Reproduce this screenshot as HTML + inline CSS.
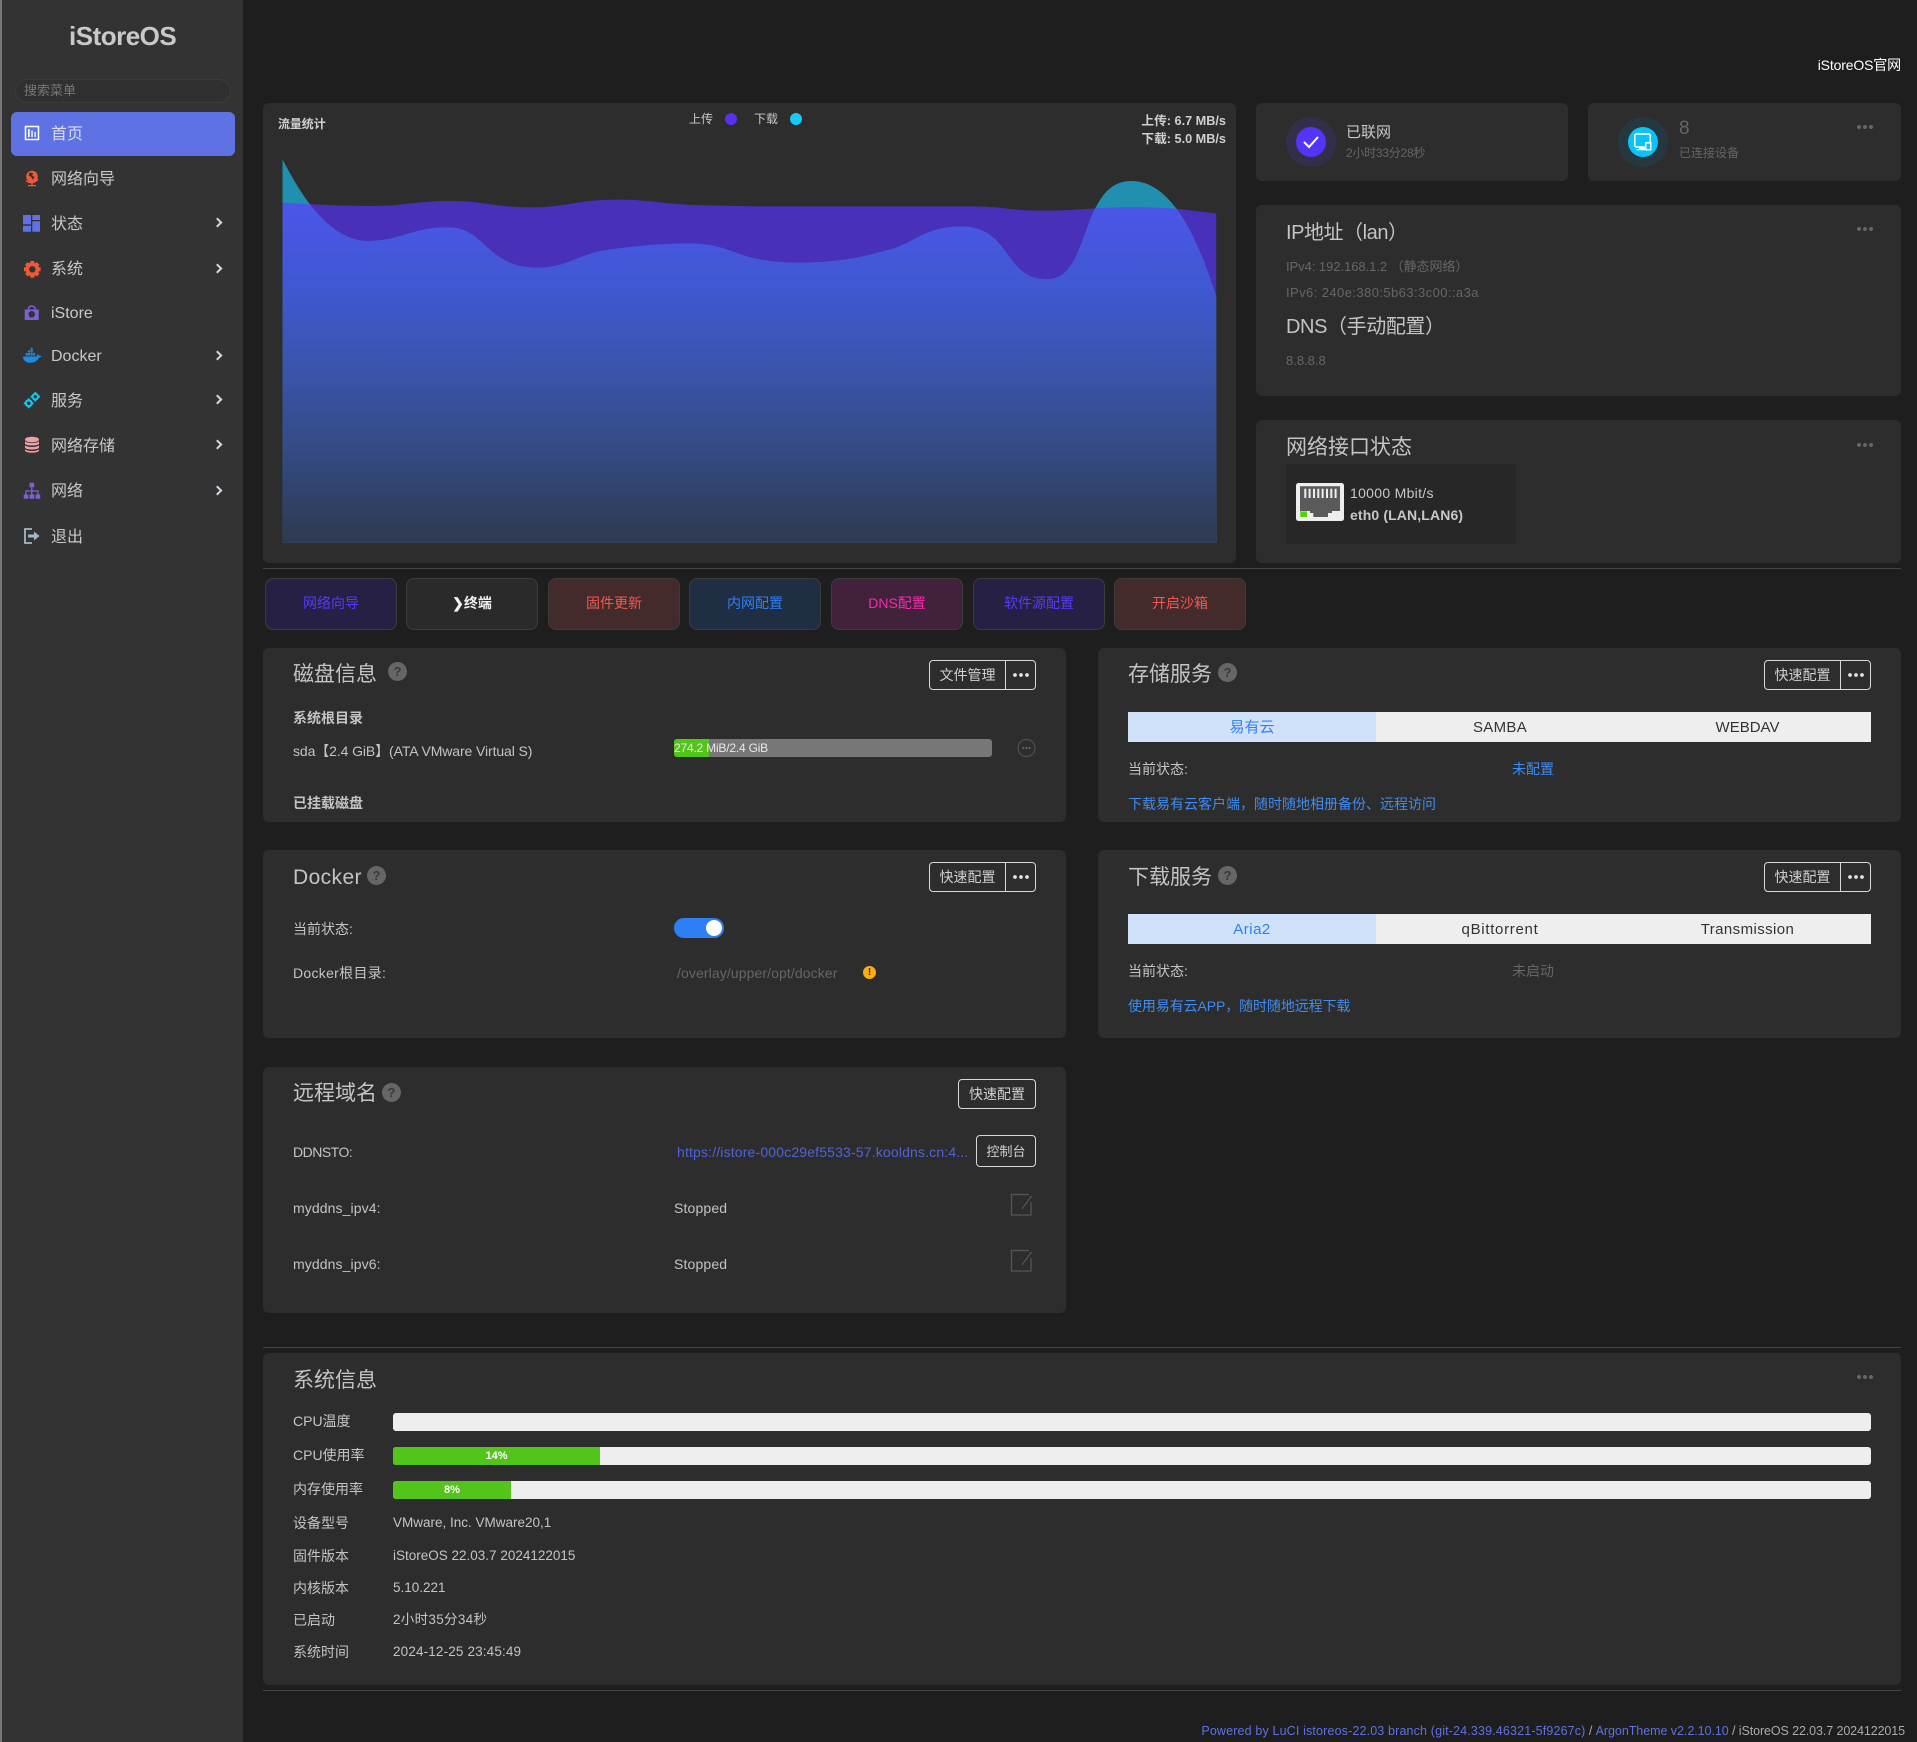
<!DOCTYPE html>
<html lang="zh-CN"><head><meta charset="utf-8"><title>iStoreOS</title>
<style>
*{box-sizing:border-box}
html,body{margin:0;padding:0;background:#1e1e1e}
body{position:relative;width:1917px;height:1742px;overflow:hidden;font-family:"Liberation Sans","Noto Sans CJK SC",sans-serif;font-size:14px;color:#c4c4c4}
.a{position:absolute}
.t{position:absolute;white-space:nowrap;line-height:20px;height:20px}
.b{margin-top:.5px;font-size:14px}
.card{position:absolute;background:#2d2d2d;border-radius:6px}
.side{position:absolute;left:2px;top:0;width:241px;height:1742px;background:#333}
.m{position:absolute;left:51px;margin-top:1px;font-size:16px;line-height:20px;color:#c8c8c8;white-space:nowrap}
.chev{position:absolute;left:214px;width:7px;height:7px;border-top:2px solid #cfd8e3;border-right:2px solid #cfd8e3;transform:rotate(45deg)}
.h{position:absolute;margin-top:1px;font-size:21px;line-height:30px;color:#c4c4c4;white-space:nowrap}
.q{position:absolute;width:19px;height:19px;border-radius:50%;background:#666;color:#3a3a3a;font-size:13px;font-weight:bold;text-align:center;line-height:19px}
.dots{position:absolute;width:16px;height:4px;background:radial-gradient(circle at 2px 2px,#666 1.8px,transparent 2.2px) 0 0/6px 4px repeat-x}
.btn{position:absolute;border:1px solid #d8d8d8;border-radius:4px;height:30px;font-size:14px;line-height:29px;color:#d0d0d0}
.btn i{font-style:normal;position:absolute;left:0;top:0;width:76px;text-align:center;height:28px;line-height:29px;border-right:1px solid #d8d8d8}
.btn b{position:absolute;right:5px;top:12px;width:17px;height:4px;background:radial-gradient(circle at 2px 2px,#e0e0e0 1.7px,transparent 2.1px) 0 0/6px 4px repeat-x}
.qb{position:absolute;top:578px;width:132px;height:52px;border-radius:8px;border:1px solid #3c3c3c;font-size:14px;line-height:49px;text-align:center}
.tab{position:absolute;height:30px;line-height:31px;text-align:center;font-size:15px;color:#333;background:#eee}
.tab.on{background:#d0e2fa;color:#2e7ff6}
.bar{position:absolute;left:393px;width:1478px;height:18px;background:#eee;border-radius:3px;overflow:hidden}
.bar i{display:block;height:18px;background:#52c41a;color:#fff;font-style:normal;font-size:11px;font-weight:bold;line-height:19px;text-align:center}
.hr{position:absolute;left:263px;width:1638px;height:1px;background:#444}
.l{color:#3f8cf4}
.g{color:#666}
</style></head><body>

<div class="a" style="left:0;top:0;width:2px;height:1742px;background:#777"></div>
<div class="side"></div>
<div class="t" style="left:69px;top:22px;font-size:26px;font-weight:bold;line-height:28px;height:28px;color:#c9c9c9;letter-spacing:-.5px">iStoreOS</div>
<div class="a" style="left:15px;top:79px;width:216px;height:24px;border:1px solid #3c3c3c;border-radius:12px;background:#303030"></div>
<div class="t" style="left:24px;top:81px;font-size:13px;color:#777">搜索菜单</div>

<div class="a" style="left:11px;top:112px;width:224px;height:44px;background:#5e72e4;border-radius:6px"></div>

<svg class="a" style="left:0;top:0" width="243" height="560" viewBox="0 0 243 560">
 <!-- home -->
 <rect x="25.500" y="126.500" width="13" height="13" fill="#5e72e4" stroke="#fff" stroke-width="1.500"/>
 <path d="M28 129h1.700v8H28z" fill="#fff"/><path d="M31.200 130.500h1.700v6.500h-1.700z" fill="#cfe3ff"/><path d="M34.300 132h1.700v5h-1.700z" fill="#cfe3ff"/>
 <!-- globe -->
 <circle cx="32" cy="176.500" r="5.800" fill="#f0583a"/><path d="M29.500 172.500l3.500 .5-.8 2.500 2.300 1.800-1.800 2.500-1.700-3-2.300-1z" fill="#333"/>
 <path d="M26 180.500c3 3 9 3 12 -1.500" stroke="#f0583a" stroke-width="1.400" fill="none"/>
 <path d="M31.300 183h1.400v2h-1.400zM28 185h8v1.300h-8z" fill="#f0583a"/>
 <!-- status -->
 <path d="M23 215h8v9.300h-8zM23 225.700h8v6h-8zM32.300 215H40v5h-7.700zM32.300 221.300H40v10.400h-7.700z" fill="#5e72e4"/>
 <!-- gear -->
 <g transform="translate(32.300 269.300)"><circle r="5" fill="none" stroke="#f0583a" stroke-width="3.600"/><path d="M-2-8.300h4v3h-4zM-2 5.300h4v3h-4zM-8.300-2h3v4h-3zM5.300-2h3v4h-3z" fill="#f0583a"/><path d="M-2-8.300h4v3h-4zM-2 5.300h4v3h-4zM-8.300-2h3v4h-3zM5.300-2h3v4h-3z" fill="#f0583a" transform="rotate(45)"/></g>
 <!-- bag -->
 <path d="M24.700 309.500h14V320h-14z" fill="#7e5fd8"/>
 <path d="M28.500 310v-1.500a3.200 2.500 0 0 1 6.400 0V310" stroke="#7e5fd8" stroke-width="1.500" fill="none"/>
 <circle cx="31.700" cy="314.300" r="3.300" fill="#333"/>
 <!-- docker -->
 <path d="M23 356.500c0 4 3 6.300 7.500 6.300 4.500 0 7.300-2.600 8.500-5.300 1.200 0 2-.6 2.500-1.300-1-.6-2-.5-2.500-.3-.3-1-1-1.500-1.500-1.800-.6.8-.8 1.500-.6 2.400z" fill="#1d8ce0"/>
 <path d="M25.700 353h2v2.600h-2zM28.200 353h2v2.600h-2zM30.700 353h2v2.600h-2zM33.200 353h2v2.600h-2zM28.200 350.300h2v2.200h-2zM30.700 350.300h2v2.200h-2zM30.700 347.800h2v2.200h-2z" fill="#1d8ce0"/>
 <!-- services -->
 <g fill="none" stroke="#17c3e0" stroke-width="2.300"><circle cx="28.700" cy="403.300" r="2.900"/><circle cx="35.300" cy="396.700" r="2.700"/></g>
 <g fill="#17c3e0"><path d="M27.800 398.300h1.800v1.800h-1.800zM27.800 406.500h1.800v1.800h-1.800zM23.800 402.400h1.800v1.800h-1.800zM31.800 402.400h1.800v1.800h-1.800zM34.400 392h1.800v1.800h-1.800zM34.400 399.700h1.800v1.800h-1.800zM30.500 395.800h1.800v1.800h-1.800zM38.300 395.800h1.800v1.800h-1.800z"/></g>
 <!-- db -->
 <g fill="#f2a0a8"><ellipse cx="32" cy="439.500" rx="7" ry="2.800"/><path d="M25 441.300c2 2.400 12 2.400 14 0v2.400c-2 2.400-12 2.400-14 0zM25 445.300c2 2.400 12 2.400 14 0v2.400c-2 2.400-12 2.400-14 0zM25 449.300c2 2.400 12 2.400 14 0v1.400c-2 2.600-12 2.600-14 0z"/></g>
 <!-- network -->
 <g fill="#7e5fd8"><path d="M29.500 482.700h4.700v4.500h-4.700zM23.700 494.500h4.700v4.200h-4.700zM29.500 494.500h4.700v4.200h-4.700zM35.500 494.500h4.700v4.200h-4.700z"/></g>
 <path d="M31.800 487v7.500M26 494.500v-3.500h12v3.500" stroke="#7e5fd8" stroke-width="1.300" fill="none"/>
 <!-- logout -->
 <path d="M32 529h-7v14h7" fill="none" stroke="#a6b8c6" stroke-width="1.800"/>
 <path d="M28 534.500h6v-3l5.500 4.500-5.500 4.500v-3h-6z" fill="#a6b8c6"/>
</svg>

<div class="m" style="top:124px;color:#d8dcf5">首页</div>
<div class="m" style="top:169px">网络向导</div>
<div class="m" style="top:214px">状态</div>
<div class="m" style="top:259px">系统</div>
<div class="m" style="top:303px">iStore</div>
<div class="m" style="top:346px">Docker</div>
<div class="m" style="top:391px">服务</div>
<div class="m" style="top:436px">网络存储</div>
<div class="m" style="top:481px">网络</div>
<div class="m" style="top:527px">退出</div>
<div class="chev" style="top:219px"></div>
<div class="chev" style="top:265px"></div>
<div class="chev" style="top:352px"></div>
<div class="chev" style="top:396px"></div>
<div class="chev" style="top:441px"></div>
<div class="chev" style="top:487px"></div>

<div class="t" style="right:16px;top:55px;font-size:14px;color:#fff;letter-spacing:-.15px">iStoreOS官网</div>

<!-- chart card -->
<div class="card" style="left:263px;top:103px;width:973px;height:460px"></div>
<svg class="a" style="left:250px;top:90px" width="1000" height="490" viewBox="0 0 1568 1470" preserveAspectRatio="none">
 <defs>
  <linearGradient id="ov" gradientUnits="userSpaceOnUse" x1="0" y1="330" x2="0" y2="1358">
   <stop offset="0" stop-color="#4c55ea"/><stop offset=".25" stop-color="#4058d2"/><stop offset=".5" stop-color="#3a54ab"/><stop offset=".75" stop-color="#334a80"/><stop offset="1" stop-color="#2e3a4f"/>
  </linearGradient>
  <clipPath id="upc"><path d="M51 338C90 342 130 348 190 348C240 348 260 333 315 333C370 333 380 352 440 352C500 352 510 329 575 329C640 329 650 345 720 346C780 349 800 349 860 349L1130 349C1180 349 1190 362 1245 362C1300 362 1330 351 1385 351C1440 351 1470 360 1515 370L1515 1358L51 1358Z"/></clipPath>
 </defs>
 <path d="M51 338C90 342 130 348 190 348C240 348 260 333 315 333C370 333 380 352 440 352C500 352 510 329 575 329C640 329 650 345 720 346C780 349 800 349 860 349L1130 349C1180 349 1190 362 1245 362C1300 362 1330 351 1385 351C1440 351 1470 360 1515 370L1515 1358L51 1358Z" fill="#4830b8"/>
 <path d="M51 208C75 295 120 453 185 453C235 453 255 412 310 412C370 412 370 533 450 533C500 533 510 495 560 480C610 467 650 461 690 461C760 461 760 518 860 518C920 518 960 503 1010 475C1040 458 1060 410 1115 410C1195 410 1180 568 1250 568C1320 568 1300 273 1382 273C1450 273 1490 470 1515 620L1515 1358L51 1358Z" fill="#2190b0"/>
 <path clip-path="url(#upc)" d="M51 208C75 295 120 453 185 453C235 453 255 412 310 412C370 412 370 533 450 533C500 533 510 495 560 480C610 467 650 461 690 461C760 461 760 518 860 518C920 518 960 503 1010 475C1040 458 1060 410 1115 410C1195 410 1180 568 1250 568C1320 568 1300 273 1382 273C1450 273 1490 470 1515 620L1515 1358L51 1358Z" fill="url(#ov)"/>
</svg>
<div class="t" style="left:278px;top:114px;font-size:12px;font-weight:bold;color:#d0d0d0;letter-spacing:-.1px">流量统计</div>
<div class="t" style="left:689px;top:109px;font-size:12px;color:#c8c8c8">上传</div>
<div class="a" style="left:725px;top:113px;width:12px;height:12px;border-radius:50%;background:#5a30f0"></div>
<div class="t" style="left:754px;top:109px;font-size:12px;color:#c8c8c8">下载</div>
<div class="a" style="left:790px;top:113px;width:12px;height:12px;border-radius:50%;background:#19c8f5"></div>
<div class="t" style="right:691px;top:111px;font-size:12.700px;font-weight:bold;color:#d0d0d0">上传: 6.7 MB/s</div>
<div class="t" style="right:691px;top:129px;font-size:12.700px;font-weight:bold;color:#d0d0d0">下载: 5.0 MB/s</div>

<!-- status cards -->
<div class="card" style="left:1256px;top:103px;width:312px;height:78px"></div>
<div class="a" style="left:1286px;top:117px;width:50px;height:50px;border-radius:50%;background:#332f4a"></div>
<div class="a" style="left:1296px;top:127px;width:30px;height:30px;border-radius:50%;background:#5533f7"></div>
<svg class="a" style="left:1296px;top:127px" width="30" height="30"><path d="M8 15l5 5 9-10" fill="none" stroke="#fff" stroke-width="2"/></svg>
<div class="t" style="left:1346px;top:123px;font-size:15px;color:#c8c8c8">已联网</div>
<div class="t" style="left:1346px;top:143px;font-size:12px;color:#666;letter-spacing:-.25px">2小时33分28秒</div>

<div class="card" style="left:1588px;top:103px;width:313px;height:78px"></div>
<div class="a" style="left:1618px;top:117px;width:50px;height:50px;border-radius:50%;background:#25383f"></div>
<div class="a" style="left:1628px;top:127px;width:30px;height:30px;border-radius:50%;background:#0cc2fb"></div>
<svg class="a" style="left:1628px;top:127px" width="30" height="30"><path d="M17 20H8.500a1.700 1.700 0 0 1-1.700-1.700V8.700A1.700 1.700 0 0 1 8.500 7h12a1.700 1.700 0 0 1 1.700 1.700V15" fill="none" stroke="#fff" stroke-width="1.400"/><path d="M11 20v2h-2.500v1.200H17V20z" fill="#fff"/><rect x="17.800" y="15.800" width="5" height="7" fill="#0cc2fb" stroke="#fff" stroke-width="1.300"/></svg>
<div class="t" style="left:1679px;top:119px;font-size:19px;color:#666">8</div>
<div class="t" style="left:1679px;top:143px;font-size:12px;color:#666">已连接设备</div>
<div class="dots" style="left:1857px;top:125px"></div>

<!-- IP card -->
<div class="card" style="left:1256px;top:205px;width:645px;height:191px"></div>
<div class="h" style="left:1286px;top:217px;font-size:20px;letter-spacing:-.45px">IP地址（lan）</div>
<div class="dots" style="left:1857px;top:227px"></div>
<div class="t g" style="left:1286px;top:257px;font-size:13px;letter-spacing:-.05px">IPv4: 192.168.1.2 （静态网络）</div>
<div class="t g" style="left:1286px;top:283px;font-size:13px;letter-spacing:.42px">IPv6: 240e:380:5b63:3c00::a3a</div>
<div class="h" style="left:1286px;top:311px;font-size:20px;letter-spacing:-.4px">DNS（手动配置）</div>
<div class="t g" style="left:1286px;top:351px;font-size:13px">8.8.8.8</div>

<!-- net card -->
<div class="card" style="left:1256px;top:420px;width:645px;height:143px"></div>
<div class="h" style="left:1286px;top:432px">网络接口状态</div>
<div class="dots" style="left:1857px;top:443px"></div>
<div class="a" style="left:1286px;top:464px;width:230px;height:80px;background:#272727"></div>
<svg class="a" style="left:1296px;top:483px" width="48" height="38" viewBox="0 0 48 38">
 <rect width="48" height="38" rx="2.500" fill="#eee"/>
 <path d="M4 3.300h40V28h-8v2h-4v4H17.300v-4H14v-2H4z" fill="#5a5a5a"/>
 <path d="M8.300 5.700h2V15h-2zM12.600 5.700h2V15h-2zM17 5.700h2V15h-2zM21.300 5.700h2V15h-2zM25.600 5.700h2V15h-2zM30 5.700h2V15h-2zM34.300 5.700h2V15h-2zM38.600 5.700h2V15h-2z" fill="#eee"/>
 <rect x="4.300" y="28.400" width="6.700" height="5.600" fill="#4fd30f"/>
</svg>
<div class="t" style="left:1350px;top:483px;font-size:14px;color:#c8c8c8;letter-spacing:.3px">10000 Mbit/s</div>
<div class="t" style="left:1350px;top:505px;font-size:14px;font-weight:bold;color:#c8c8c8;letter-spacing:.13px">eth0 (LAN,LAN6)</div>

<div class="hr" style="top:568px"></div>

<!-- quick buttons -->
<div class="qb" style="left:265px;background:#262144;color:#553afb">网络向导</div>
<div class="qb" style="left:406px;background:#2a2a2a;color:#f2f2f2;font-weight:bold">❯终端</div>
<div class="qb" style="left:548px;background:#432b2b;color:#f8564f">固件更新</div>
<div class="qb" style="left:689px;background:#1f2e42;color:#2e7ff6">内网配置</div>
<div class="qb" style="left:831px;background:#42223a;color:#f52bb2">DNS配置</div>
<div class="qb" style="left:973px;background:#262144;color:#553afb">软件源配置</div>
<div class="qb" style="left:1114px;background:#432b2b;color:#f8564f">开启沙箱</div>

<!-- disk -->
<div class="card" style="left:263px;top:648px;width:803px;height:174px"></div>
<div class="h" style="left:293px;top:659px">磁盘信息</div>
<div class="q" style="left:388px;top:662px">?</div>
<div class="btn" style="left:929px;top:660px;width:107px"><i>文件管理</i><b></b></div>
<div class="t b" style="left:293px;top:707px;font-weight:bold;color:#c4c4c4">系统根目录</div>
<div class="t b" style="left:293px;top:740px;letter-spacing:-.1px">sda【2.4 GiB】(ATA VMware Virtual S)</div>
<div class="a" style="left:674px;top:739px;width:318px;height:18px;background:#777;border-radius:3px;overflow:hidden"><div style="width:35px;height:18px;background:#52c41a"></div></div>
<div class="t" style="left:674px;top:738px;font-size:12px;color:#e8e8e8;letter-spacing:-.2px">274.2 MiB/2.4 GiB</div>
<svg class="a" style="left:1017px;top:739px" width="19" height="18"><circle cx="9.500" cy="9" r="8.500" fill="none" stroke="#555"/><path d="M5.500 8h1.800v2H5.500zM8.600 8h1.800v2H8.600zM11.700 8h1.800v2h-1.800z" fill="#666"/></svg>
<div class="t b" style="left:293px;top:792px;font-weight:bold;color:#c4c4c4">已挂载磁盘</div>

<!-- docker -->
<div class="card" style="left:263px;top:850px;width:803px;height:188px"></div>
<div class="h" style="left:293px;top:862px;letter-spacing:.4px">Docker</div>
<div class="q" style="left:367px;top:866px">?</div>
<div class="btn" style="left:929px;top:862px;width:107px"><i>快速配置</i><b></b></div>
<div class="t b" style="left:293px;top:918px">当前状态:</div>
<div class="a" style="left:674px;top:918px;width:50px;height:20px;background:#2e7ff6;border-radius:10px"></div>
<div class="a" style="left:706px;top:920px;width:16px;height:16px;background:#fff;border-radius:50%"></div>
<div class="t b" style="left:293px;top:962px;letter-spacing:.3px">Docker根目录:</div>
<div class="t g" style="left:677px;top:963px;font-size:14px;letter-spacing:.1px">/overlay/upper/opt/docker</div>
<div class="a" style="left:863px;top:966px;width:13px;height:13px;border-radius:50%;background:#faad14;color:#2d2d2d;font-size:10px;font-weight:bold;line-height:13px;text-align:center">!</div>

<!-- storage -->
<div class="card" style="left:1098px;top:648px;width:803px;height:174px"></div>
<div class="h" style="left:1128px;top:659px">存储服务</div>
<div class="q" style="left:1218px;top:663px">?</div>
<div class="btn" style="left:1764px;top:660px;width:107px"><i>快速配置</i><b></b></div>
<div class="tab on" style="left:1128px;top:712px;width:248px">易有云</div>
<div class="tab" style="left:1376px;top:712px;width:248px;letter-spacing:.3px">SAMBA</div>
<div class="tab" style="left:1624px;top:712px;width:247px">WEBDAV</div>
<div class="t b" style="left:1128px;top:758px">当前状态:</div>
<div class="t b l" style="left:1512px;top:758px">未配置</div>
<div class="t b l" style="left:1128px;top:793px">下载易有云客户端，随时随地相册备份、远程访问</div>

<!-- download -->
<div class="card" style="left:1098px;top:850px;width:803px;height:188px"></div>
<div class="h" style="left:1128px;top:862px">下载服务</div>
<div class="q" style="left:1218px;top:866px">?</div>
<div class="btn" style="left:1764px;top:862px;width:107px"><i>快速配置</i><b></b></div>
<div class="tab on" style="left:1128px;top:914px;width:248px;letter-spacing:.5px">Aria2</div>
<div class="tab" style="left:1376px;top:914px;width:248px;letter-spacing:.7px">qBittorrent</div>
<div class="tab" style="left:1624px;top:914px;width:247px;letter-spacing:.4px">Transmission</div>
<div class="t b" style="left:1128px;top:960px">当前状态:</div>
<div class="t b g" style="left:1512px;top:960px">未启动</div>
<div class="t b l" style="left:1128px;top:995px;letter-spacing:-.1px">使用易有云APP，随时随地远程下载</div>

<!-- domain -->
<div class="card" style="left:263px;top:1067px;width:803px;height:246px"></div>
<div class="h" style="left:293px;top:1078px">远程域名</div>
<div class="q" style="left:382px;top:1083px">?</div>
<div class="btn" style="left:958px;top:1079px;width:78px;text-align:center">快速配置</div>
<div class="t b" style="left:293px;top:1141px;letter-spacing:-.5px">DDNSTO:</div>
<div class="t b" style="left:677px;top:1141px;color:#4f63d9;letter-spacing:.16px">https://istore-000c29ef5533-57.kooldns.cn:4...</div>
<div class="btn" style="left:976px;top:1135px;width:60px;height:32px;text-align:center;line-height:31px;font-size:13px">控制台</div>
<div class="t b" style="left:293px;top:1197px;letter-spacing:.1px">myddns_ipv4:</div>
<div class="t b" style="left:674px;top:1197px;letter-spacing:.15px">Stopped</div>
<svg class="a" style="left:1010px;top:1193px" width="23" height="23"><path d="M19 1.500H1.500V22H21V9M21.500 3L12 16" fill="none" stroke="#555" stroke-width="1.300"/></svg>
<div class="t b" style="left:293px;top:1253px;letter-spacing:.1px">myddns_ipv6:</div>
<div class="t b" style="left:674px;top:1253px;letter-spacing:.15px">Stopped</div>
<svg class="a" style="left:1010px;top:1249px" width="23" height="23"><path d="M19 1.500H1.500V22H21V9M21.500 3L12 16" fill="none" stroke="#555" stroke-width="1.300"/></svg>

<div class="hr" style="top:1347px"></div>

<!-- system -->
<div class="card" style="left:263px;top:1353px;width:1638px;height:332px"></div>
<div class="h" style="left:293px;top:1365px">系统信息</div>
<div class="dots" style="left:1857px;top:1375px"></div>
<div class="t b" style="left:293px;top:1410px">CPU温度</div>
<div class="bar" style="top:1413px"></div>
<div class="t b" style="left:293px;top:1444px">CPU使用率</div>
<div class="bar" style="top:1447px"><i style="width:207px">14%</i></div>
<div class="t b" style="left:293px;top:1478px">内存使用率</div>
<div class="bar" style="top:1481px"><i style="width:118px">8%</i></div>
<div class="t b" style="left:293px;top:1512px">设备型号</div>
<div class="t b" style="left:393px;top:1512px;font-size:13.500px">VMware, Inc. VMware20,1</div>
<div class="t b" style="left:293px;top:1545px">固件版本</div>
<div class="t b" style="left:393px;top:1545px;font-size:13.500px">iStoreOS 22.03.7 2024122015</div>
<div class="t b" style="left:293px;top:1577px">内核版本</div>
<div class="t b" style="left:393px;top:1577px;font-size:13.500px">5.10.221</div>
<div class="t b" style="left:293px;top:1609px">已启动</div>
<div class="t b" style="left:393px;top:1609px;font-size:13.500px;letter-spacing:.3px">2小时35分34秒</div>
<div class="t b" style="left:293px;top:1641px">系统时间</div>
<div class="t b" style="left:393px;top:1641px;font-size:13.500px;letter-spacing:.15px">2024-12-25 23:45:49</div>

<div class="hr" style="top:1690px"></div>
<div class="t" style="right:12px;top:1721px;font-size:12.500px;color:#aaa;letter-spacing:-.1px"><span style="color:#5e72e4;letter-spacing:.15px">Powered by LuCI istoreos-22.03 branch (git-24.339.46321-5f9267c)</span> / <span style="color:#5e72e4;letter-spacing:-.05px">ArgonTheme v2.2.10.10</span> / iStoreOS 22.03.7 2024122015</div>

</body></html>
